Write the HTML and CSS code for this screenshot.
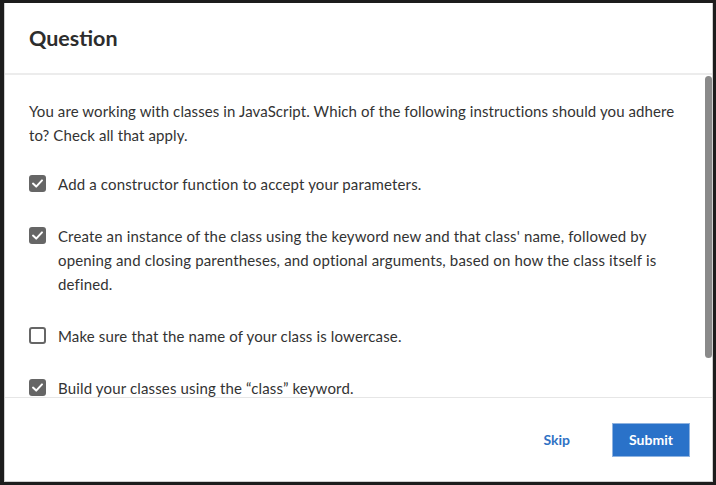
FILE: index.html
```html
<!DOCTYPE html>
<html>
<head>
<meta charset="utf-8">
<link rel="stylesheet" href="styles.css">
</head>
<body>
<div class="modal">
  <div class="modal-header"><h1 class="title">Question</h1></div>
  <div class="modal-body">
    <div class="scroll-content">
      <p class="prompt">You are working with classes in JavaScript. Which of the following instructions should you adhere to? Check all that apply.</p>
      <ul class="options">
        <li class="option"><span class="box checked"><svg viewBox="0 0 17 17"><path d="M4 8.6 L7.2 11.6 L13 5.4" /></svg></span><span class="label">Add a constructor function to accept your parameters.</span></li>
        <li class="option"><span class="box checked"><svg viewBox="0 0 17 17"><path d="M4 8.6 L7.2 11.6 L13 5.4" /></svg></span><span class="label">Create an instance of the class using the keyword new and that class' name, followed by opening and closing parentheses, and optional arguments, based on how the class itself is defined.</span></li>
        <li class="option"><span class="box"></span><span class="label">Make sure that the name of your class is lowercase.</span></li>
        <li class="option"><span class="box checked"><svg viewBox="0 0 17 17"><path d="M4 8.6 L7.2 11.6 L13 5.4" /></svg></span><span class="label">Build your classes using the “class” keyword.</span></li>
      </ul>
    </div>
    <div class="scroll-thumb"></div>
  </div>
  <div class="modal-footer">
    <button class="btn-skip">Skip</button>
    <button class="btn-submit">Submit</button>
  </div>
</div>
</body>
</html>
```

FILE: styles.css
```css
html, body {
  margin: 0;
  height: 100%;
}
body {
  background: #1d1d1d;
  padding: 3px 3px 3px 4px;
  box-sizing: border-box;
  font-family: "Lato", "Liberation Sans", sans-serif;
  color: #333;
}
.modal {
  height: 479px;
  width: 709px;
  box-sizing: border-box;
  background: #fff;
  border: 1px solid #cfcfcf;
  border-top: none;
  display: flex;
  flex-direction: column;
}
.modal-header {
  height: 70px;
  border-bottom: 2px solid #ececec;
  display: flex;
  align-items: center;
  padding: 0 24px;
  flex: none;
}
.title {
  margin: 0;
  font-size: 21.5px;
  font-weight: 700;
  color: #2d2d2d;
  padding-bottom: 1px;
}
.modal-body {
  position: relative;
  flex: 1;
  overflow: hidden;
  border-bottom: 1px solid #e6e6e6;
}
.scroll-content {
  padding: 24px 32px 0 24px;
}
.prompt {
  margin: 0;
  font-size: 15px;
  line-height: 24px;
  letter-spacing: 0.1px;
}
.options {
  list-style: none;
  margin: 0;
  padding: 0;
}
.option {
  display: flex;
  align-items: flex-start;
  gap: 12px;
  margin-top: 28px;
  font-size: 15px;
  line-height: 24px;
  letter-spacing: 0.15px;
}
.options .option:first-child {
  margin-top: 25px;
}
.box {
  flex: none;
  width: 17px;
  height: 17px;
  margin-top: 3px;
  box-sizing: border-box;
  border: 2px solid #666;
  border-radius: 3px;
  background: #fff;
  display: flex;
}
.box.checked {
  background: #666;
  border: none;
}
.box svg {
  width: 17px;
  height: 17px;
}
.box svg path {
  fill: none;
  stroke: #fff;
  stroke-width: 2;
  stroke-linecap: round;
  stroke-linejoin: round;
}
.scroll-thumb {
  position: absolute;
  right: 0;
  top: 1px;
  width: 7px;
  height: 282px;
  border-radius: 4px;
  background: #8a8a8a;
}
.modal-footer {
  flex: none;
  height: 83px;
  display: flex;
  align-items: center;
  justify-content: flex-end;
  padding-right: 22px;
  gap: 40px;
}
.btn-skip {
  background: none;
  border: none;
  font-family: inherit;
  font-size: 14px;
  font-weight: 700;
  color: #2f72c4;
  padding: 0;
  margin-right: 2px;
  cursor: pointer;
}
.btn-submit {
  width: 78px;
  height: 34px;
  background: #2a72c9;
  border: 1px solid #8fb3e0;
  color: #fff;
  font-family: inherit;
  font-size: 14px;
  font-weight: 700;
  padding: 0;
  cursor: pointer;
}
```
